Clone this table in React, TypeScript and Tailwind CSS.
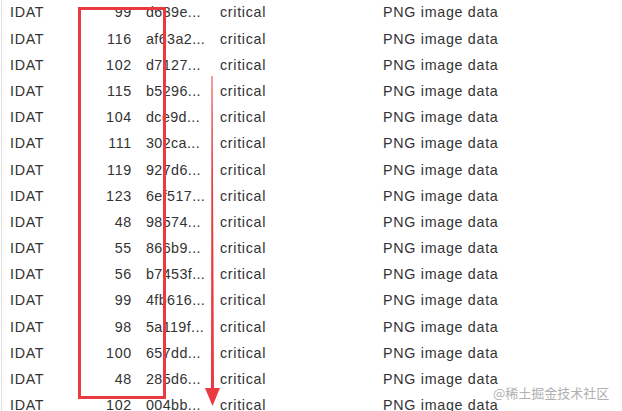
import React from "react";

const rows: [number, string][] = [
  [99, "d639e..."],
  [116, "af63a2..."],
  [102, "d7127..."],
  [115, "b5296..."],
  [104, "dce9d..."],
  [111, "302ca..."],
  [119, "927d6..."],
  [123, "6ef517..."],
  [48, "98574..."],
  [55, "866b9..."],
  [56, "b7453f..."],
  [99, "4fb616..."],
  [98, "5a119f..."],
  [100, "657dd..."],
  [48, "285d6..."],
  [102, "004bb..."],
];

export default function App() {
  return (
    <div
      className="relative w-[622px] h-[411px] overflow-hidden bg-white text-[#333] text-[14.3px] tracking-[0.7px]"
      style={{ fontFamily: '"Liberation Sans", Arial, sans-serif' }}
    >
      <div className="pl-[1px] h-full">
        <div className="border-l border-[#e3e3e3] h-full pl-[7px]">
          <div className="flex flex-col">
            {rows.map(([n, h], i) => (
              <div key={i} className="flex items-center h-[26.2px] whitespace-nowrap">
                <div className="w-[73px] pl-[1px]">IDAT</div>
                <div className="w-[50px] text-right -mr-[1px]">{n}</div>
                <div className="w-[89px] pl-[15px] tracking-[0.4px]">{h}</div>
                <div className="w-[163px]">critical</div>
                <div>PNG image data</div>
              </div>
            ))}
          </div>
        </div>
      </div>
      <div className="absolute left-[78px] top-[7px] w-[88px] h-[392px] border-[3px] border-[#ea3a3f]" />
      <svg className="absolute left-0 top-0" width="622" height="411">
        <polygon
          points="211.5,76 212.5,76 214,388 220,388 212.5,406 205,388 211,388"
          fill="#ea3a3f"
        />
      </svg>
      <div
        className="absolute left-[493px] top-[383px] text-[13px] tracking-normal text-[#b0b0b0] whitespace-nowrap"
        style={{ fontFamily: '"Noto Sans CJK SC", "Liberation Sans", sans-serif' }}
      >
        @稀土掘金技术社区
      </div>
    </div>
  );
}
